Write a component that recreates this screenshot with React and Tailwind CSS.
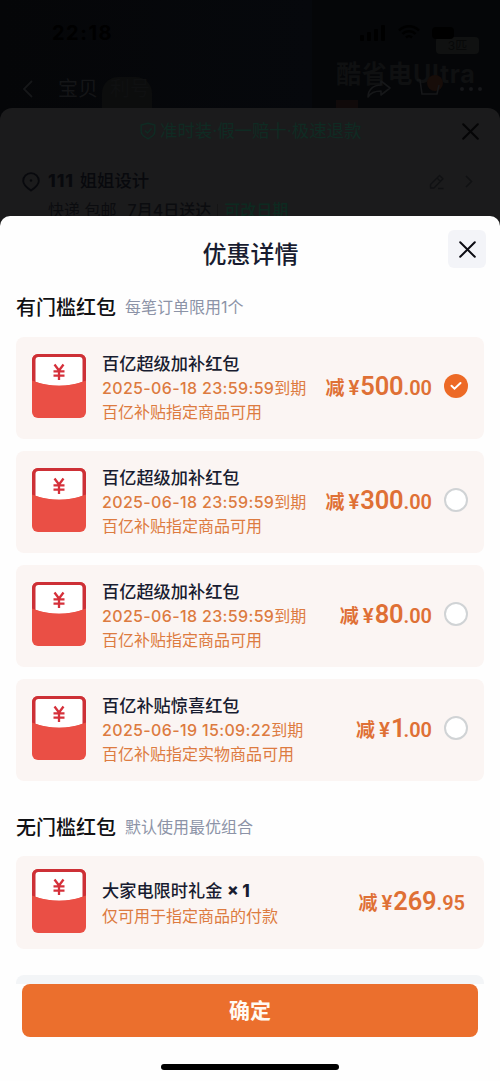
import React, { useState } from 'react';

const COUPONS = [
  {
    id: 1,
    title: '百亿超级加补红包',
    expires: '2025-06-18 23:59:59',
    scope: '百亿补贴指定商品可用',
    amount: '500.00',
  },
  {
    id: 2,
    title: '百亿超级加补红包',
    expires: '2025-06-18 23:59:59',
    scope: '百亿补贴指定商品可用',
    amount: '300.00',
  },
  {
    id: 3,
    title: '百亿超级加补红包',
    expires: '2025-06-18 23:59:59',
    scope: '百亿补贴指定商品可用',
    amount: '80.00',
  },
  {
    id: 4,
    title: '百亿补贴惊喜红包',
    expires: '2025-06-19 15:09:22',
    scope: '百亿补贴指定实物商品可用',
    amount: '1.00',
  },
];

export default function App() {
  const [selected, setSelected] = useState(1);

  return (
    <div className="h-[1081px] w-[500px] overflow-hidden bg-[#050608] font-['Inter','Noto_Sans_CJK_SC',sans-serif]">
      <ProductHeader />
      <div className="rounded-t-xl bg-[#1b1b1c]">
        <OrderSheetTop />
        <div className="flex h-[865px] flex-col rounded-t-[10px] bg-[#fefefe]">
          <header className="flex h-[75px] items-start pt-[14px] pr-[14px] pl-[15px]">
            <div className="w-[38px]" />
            <h1 className="mt-[5px] flex-1 text-center text-2xl leading-10 font-medium text-[#181c30]">优惠详情</h1>
            <button
              type="button"
              aria-label="关闭"
              className="flex size-[38px] items-center justify-center rounded-md bg-[#f3f4f8] text-[#0b0b12]"
            >
              <CloseIcon size={17} />
            </button>
          </header>

          <SectionTitle title="有门槛红包" hint="每笔订单限用1个" />
          <div className="mx-4 mt-[13.5px] flex flex-col gap-3">
            {COUPONS.map((c) => (
              <CouponCard key={c.id} coupon={c} checked={c.id === selected} onSelect={() => setSelected(c.id)} />
            ))}
          </div>

          <div className="mt-[30.5px]">
            <SectionTitle title="无门槛红包" hint="默认使用最优组合" />
          </div>
          <div className="mx-4 mt-[13px] flex h-[93px] items-center rounded-lg bg-[#fbf5f3] pr-[19px] pl-4">
            <Envelope />
            <div className="ml-4 flex-1 pt-px">
              <div className="text-[17.2px] leading-[25px] font-medium text-[#181c30]">
                大家电限时礼金 <span className="text-[17px] font-extrabold">× 1</span>
              </div>
              <div className="text-base leading-[25px] text-[#dd7b40]">仅可用于指定商品的付款</div>
            </div>
            <Price amount="269.95" />
          </div>

          <div className="mx-4 mt-[26px] h-[9px] rounded-t-lg bg-[#f3f5f7]" />
          <button
            type="button"
            className="mx-[22px] h-[53px] rounded-lg bg-[#eb6f2d] text-[21px] font-bold text-[#fffaf2]"
          >
            确定
          </button>
          <div className="mx-auto mt-[27px] h-[6px] w-[178px] rounded-full bg-black" />
        </div>
      </div>
    </div>
  );
}

function ProductHeader() {
  return (
    <div className="relative h-[108px] overflow-hidden">
      {/* product photo behind the navigation */}
      <div className="absolute inset-y-0 left-0 w-[312px] bg-linear-to-r from-[#050608] to-[#06080c]" />
      <div className="absolute top-[77px] left-[102px] h-10 w-[50px] rounded-t-2xl bg-[#0c0d0d]" />
      <div className="absolute top-[37px] left-[436px] h-[17px] w-[43px] rounded bg-[#101111] text-center text-xs leading-[17px] text-[#070808]">
        3匹
      </div>
      <div className="absolute top-[58px] left-[336px] text-[25px] leading-8 font-bold tracking-[0.7px] whitespace-nowrap text-[#0f1011]">
        酷省电Ultra
      </div>
      <div className="absolute top-[100px] left-[336px] h-2 w-[22px] bg-[#100a0a]" />
      <div className="absolute top-[75px] left-[427px] size-4 rounded-full bg-[#170d09]" />

      <div className="relative flex h-[66px] items-center justify-between pr-[46px] pl-[52px] text-black">
        <span className="text-[20px] font-bold tracking-[1.5px]">22:18</span>
        <div className="flex items-center gap-3">
          <svg width="26" height="16" viewBox="0 0 26 16" fill="currentColor">
            <rect x="0" y="10" width="4" height="6" rx="1" />
            <rect x="7" y="7" width="4" height="9" rx="1" />
            <rect x="14" y="4" width="4" height="12" rx="1" />
            <rect x="21" y="0" width="4" height="16" rx="1" />
          </svg>
          <svg width="22" height="16" viewBox="0 0 22 16" fill="none" stroke="currentColor" strokeWidth="2.5">
            <path d="M1 5.5a14 14 0 0 1 20 0M4.5 9a9 9 0 0 1 13 0M8 12.5a4.3 4.3 0 0 1 6 0" />
          </svg>
          <div className="h-3 w-[22px] rounded bg-black" />
        </div>
      </div>

      <div className="relative flex h-[46px] items-center pr-[17px] pl-[22px] text-[#161719]">
        <svg width="12" height="18" viewBox="0 0 12 18" fill="none" stroke="currentColor" strokeWidth="1.8">
          <path d="M10 1 2 9l8 8" />
        </svg>
        <span className="ml-6 text-xl leading-6 text-[#141517]">宝贝</span>
        <span className="ml-3 text-xl leading-6 text-[#0f1011]">利号</span>
        <svg
          className="ml-auto"
          width="26"
          height="20"
          viewBox="0 0 26 20"
          fill="none"
          stroke="currentColor"
          strokeWidth="1.6"
          strokeLinejoin="round"
        >
          <path d="M15 2l9 7-9 7v-4C9 12 5 13 2 18 2 11 7 6 15 6z" />
        </svg>
        <svg className="ml-6" width="25" height="22" viewBox="0 0 25 22" fill="none" stroke="currentColor" strokeWidth="1.6">
          <path d="M1 2h3l2 14h15l2-9" />
        </svg>
        <svg className="ml-[18px]" width="24" height="6" viewBox="0 0 24 6" fill="currentColor">
          <circle cx="3" cy="3" r="2" />
          <circle cx="12" cy="3" r="2" />
          <circle cx="21" cy="3" r="2" />
        </svg>
      </div>
    </div>
  );
}

function OrderSheetTop() {
  return (
    <div className="h-[108px] overflow-hidden">
      <div className="flex h-[46px] items-center pr-[21px] pl-[140px]">
        <svg
          width="16"
          height="18"
          viewBox="0 0 16 18"
          fill="none"
          stroke="#0f2b23"
          strokeWidth="1.5"
          strokeLinejoin="round"
        >
          <path d="M8 1.2 14.8 3v6.5c0 3-2.8 5.3-6.8 7.2C4 14.8 1.2 12.5 1.2 9.5V3z" />
          <path d="m4.8 8.5 2.6 2.5 4.2-4.5" />
        </svg>
        <span className="ml-1 text-[17.4px] text-[#0f2b23]">准时装·假一赔十·极速退款</span>
        <span className="ml-auto text-[#050506]">
          <CloseIcon size={17} />
        </span>
      </div>
      <div className="flex h-[54px] items-center pt-px pr-[27px] pl-[22px]">
        <svg width="18" height="20" viewBox="0 0 18 20" fill="none" stroke="#08090d" strokeWidth="1.8">
          <path d="M9 1.2a7.8 7.8 0 0 1 7.8 7.8c0 4-3.3 6.5-7.8 9.6C4.5 15.5 1.2 13 1.2 9A7.8 7.8 0 0 1 9 1.2z" />
          <circle cx="9" cy="8.5" r="1.2" fill="#08090d" stroke="none" />
        </svg>
        <span className="ml-[8px] text-[17.4px] font-medium text-[#08090d]">
          <span className="mr-px font-extrabold tracking-[1px]">111</span> 姐姐设计
        </span>
        <svg
          className="ml-auto"
          width="16"
          height="16"
          viewBox="0 0 16 16"
          fill="none"
          stroke="#101113"
          strokeWidth="1.3"
          strokeLinejoin="round"
        >
          <path d="M1.5 14v-3.5L10.5 1.5l3.5 3.3L5 14zM8 4l3.3 3.3M9 14.5h5.5" />
        </svg>
        <svg className="ml-5" width="8" height="13" viewBox="0 0 8 13" fill="none" stroke="#101113" strokeWidth="1.5">
          <path d="m1 1 5.5 5.5L1 12" />
        </svg>
      </div>
      <div className="-mt-[9px] flex items-center pl-12 text-base leading-[22px] text-[#0b0c0f]">
        <span>快递 包邮</span>
        <span className="ml-[11px] font-medium">7月4日送达</span>
        <span className="mx-[6px] h-3 w-px bg-[#151516]" />
        <span className="font-medium text-[#0d2a20]">可改日期</span>
      </div>
    </div>
  );
}

function SectionTitle({ title, hint }) {
  return (
    <div className="flex h-8 items-center pl-4">
      <h2 className="pt-0.5 text-[20px] leading-8 font-medium text-[#111114]">{title}</h2>
      <span className="ml-[9px] text-base leading-8 text-[#8c93a7]">{hint}</span>
    </div>
  );
}

function CouponCard({ coupon, checked, onSelect }) {
  return (
    <div className="flex h-[102px] cursor-pointer items-center rounded-lg bg-[#fbf5f3] px-4" onClick={onSelect}>
      <Envelope />
      <div className="ml-4 flex-1 whitespace-nowrap">
        <div className="text-[17.2px] leading-6 font-medium text-[#181c30]">{coupon.title}</div>
        <div className="text-base leading-[25px] text-[#dd7b40]">
          <span className="font-medium tracking-[0.35px]">{coupon.expires}</span>到期
        </div>
        <div className="text-base leading-[23px] text-[#dd7b40]">{coupon.scope}</div>
      </div>
      <Price amount={coupon.amount} />
      <Radio checked={checked} />
    </div>
  );
}

function Price({ amount }) {
  const [whole, cents] = amount.split('.');
  return (
    <div className="flex items-baseline font-['Roboto','Noto_Sans_CJK_SC',sans-serif] leading-8 font-semibold text-[#df7035]">
      <span className="mr-1 text-[19px] font-bold">减</span>
      <span className="mr-px text-[20.5px]">¥</span>
      <span className={whole === '1' ? '-mr-0.5 text-[25.5px]' : 'text-[25.5px] tracking-[-0.2px]'}>{whole}</span>
      <span className="text-[20px]">.{cents}</span>
    </div>
  );
}

function Radio({ checked }) {
  if (!checked) {
    return <span className="mb-[3px] ml-3 size-6 rounded-full border-2 border-[#d0d3d5] bg-white" />;
  }
  return (
    <span className="mb-[3px] ml-3 flex size-6 items-center justify-center rounded-full bg-[#ed6a26]">
      <svg width="12" height="10" viewBox="0 0 12 10" fill="none" stroke="#fff" strokeWidth="2" strokeLinecap="round">
        <path d="m1.5 4.8 3 2.9 6-5.7" />
      </svg>
    </span>
  );
}

function Envelope() {
  return (
    <svg width="54" height="64" viewBox="0 0 54 64" className="mb-[3px] shrink-0">
      <rect width="54" height="64" rx="6" fill="#ea4f45" />
      <path d="M0 27V6a6 6 0 0 1 6-6h42a6 6 0 0 1 6 6v21l-3 2H3z" fill="#cd3036" />
      <path d="M3.5 28V6a3 3 0 0 1 3-3h41a3 3 0 0 1 3 3v22q-23 7.5-47 0z" fill="#fff" />
      <path d="M0 26.500q27 10.500 54 0V34H0z" fill="#ea4f45" />
      <path
        d="m22.500 10.500 4.500 6 4.500-6M27 16.500v9.500M21.500 17.300h11M21.500 21.700h11"
        fill="none"
        stroke="#d5303a"
        strokeWidth="2.3"
      />
    </svg>
  );
}

function CloseIcon({ size }) {
  return (
    <svg width={size} height={size} viewBox="0 0 17 17" fill="none" stroke="currentColor" strokeWidth="2" strokeLinecap="round">
      <path d="m1.2 1.2 14.6 14.6M15.8 1.2 1.2 15.8" />
    </svg>
  );
}
